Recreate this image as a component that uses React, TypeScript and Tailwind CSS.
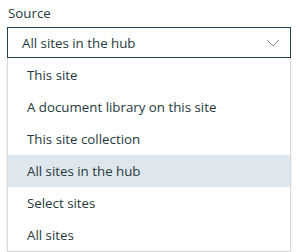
import React from 'react';

const options = [
  'This site',
  'A document library on this site',
  'This site collection',
  'All sites in the hub',
  'Select sites',
  'All sites',
];

const App: React.FC = () => {
  const selected = 'All sites in the hub';

  return (
    <div
      className="w-[301px] h-[252px] bg-white pl-[7px] pr-[10px] pt-[3px] text-[13.3px] text-[#26393d] overflow-hidden"
      style={{ fontFamily: '"Segoe UI", "Open Sans", "Noto Sans", sans-serif' }}
    >
      <div className="h-[24px] leading-[20px] pl-[1px]">Source</div>
      <div className="flex items-center justify-between h-[31px] border border-[#243f4d] pl-[14px] pr-[10px]">
        <span className="leading-[20px]">{selected}</span>
        <svg width="14" height="8" viewBox="0 0 14 8" fill="none" className="mt-[1px]">
          <path d="M1 1 L7 7 L13 1" stroke="#8a8f94" strokeWidth="1" />
        </svg>
      </div>
      <div className="border border-t-0 border-[#d4d8db] shadow-[0_2px_4px_rgba(0,0,0,0.08)] pt-[1px]">
        {options.map((opt) => (
          <div
            key={opt}
            className={`h-[32px] flex items-center pl-[19px] leading-[20px] ${
              opt === selected ? 'bg-[#dee6ee]' : 'bg-white'
            }`}
          >
            {opt}
          </div>
        ))}
      </div>
    </div>
  );
};

export default App;
